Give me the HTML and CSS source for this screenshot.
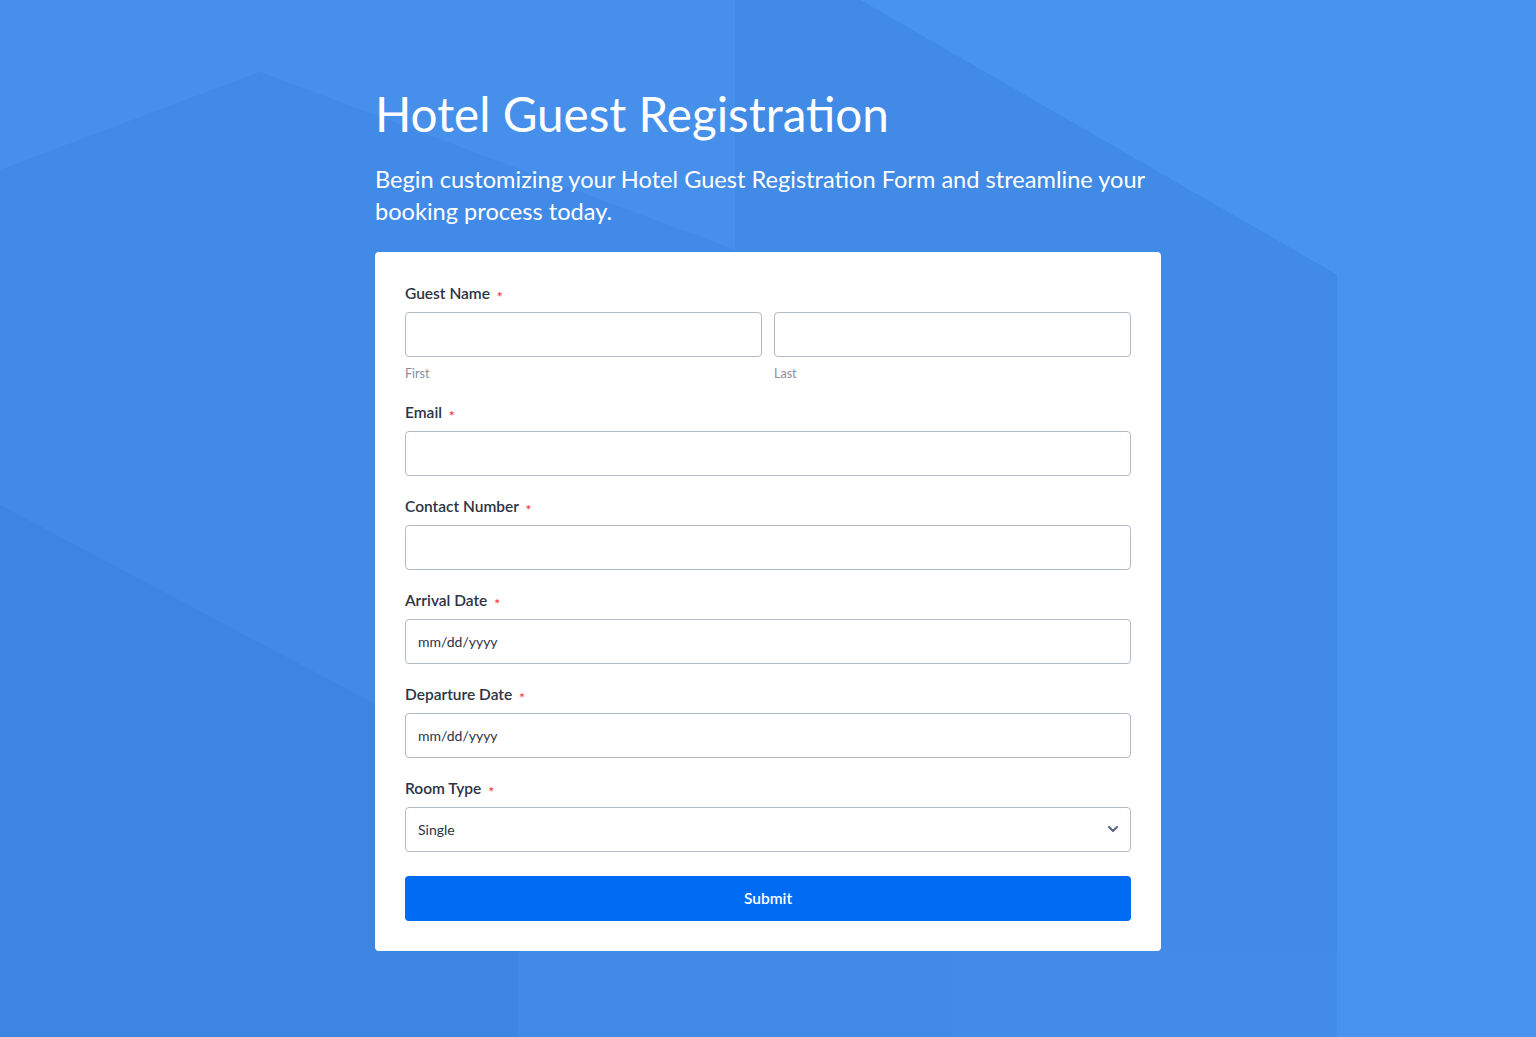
FILE: index.html
```html
<!DOCTYPE html>
<html lang="en">
<head>
<meta charset="utf-8">
<title>Hotel Guest Registration</title>
<link rel="stylesheet" href="styles.css">
</head>
<body>
<svg class="bg" viewBox="0 0 1536 1037" preserveAspectRatio="none" aria-hidden="true">
  <rect x="0" y="0" width="1536" height="1037" fill="#428be8"/>
  <polygon points="0,0 735,0 735,250 260,72 0,170" fill="#4690ec"/>
  <polygon points="0,170 260,72 735,250 735,1037 0,1037" fill="#418ae7"/>
  <polygon points="860,0 1536,0 1536,1037 1337,1037 1337,275" fill="#4892f0"/>
  <polygon points="735,0 860,0 1337,275 1337,1037 735,1037" fill="#418ae6"/>
  <polygon points="0,505 518,780 518,1037 0,1037" fill="#3c85e3"/>
  <polygon points="958,951 1337,951 1337,1037 958,1037" fill="#428ce8"/>
</svg>
<main class="page">
  <header class="intro">
    <h1 class="title">Hotel Guest Registration</h1>
    <p class="subtitle">Begin customizing your Hotel Guest Registration Form and streamline your booking process today.</p>
  </header>
  <form class="card">
    <div class="field first">
      <div class="label">Guest Name <span class="req">*</span></div>
      <div class="name-row">
        <div class="name-col">
          <input class="input" type="text">
          <div class="sublabel">First</div>
        </div>
        <div class="name-col">
          <input class="input" type="text">
          <div class="sublabel">Last</div>
        </div>
      </div>
    </div>
    <div class="field">
      <div class="label">Email <span class="req">*</span></div>
      <input class="input" type="text">
    </div>
    <div class="field">
      <div class="label">Contact Number <span class="req">*</span></div>
      <input class="input" type="text">
    </div>
    <div class="field">
      <div class="label">Arrival Date <span class="req">*</span></div>
      <input class="input date" type="text" placeholder="mm/dd/yyyy">
    </div>
    <div class="field">
      <div class="label">Departure Date <span class="req">*</span></div>
      <input class="input date" type="text" placeholder="mm/dd/yyyy">
    </div>
    <div class="field last">
      <div class="label">Room Type <span class="req">*</span></div>
      <div class="select-wrap">
        <select class="input select">
          <option>Single</option>
          <option>Double</option>
          <option>Suite</option>
        </select>
        <svg class="chevron" width="12" height="8" viewBox="0 0 12 8" aria-hidden="true"><path d="M2 2 L6 6 L10 2" fill="none" stroke="#57647e" stroke-width="2" stroke-linecap="round" stroke-linejoin="round"/></svg>
      </div>
    </div>
    <button class="submit" type="button">Submit</button>
  </form>
</main>
</body>
</html>
```

FILE: styles.css
```css
* { box-sizing: border-box; }
html, body { margin: 0; padding: 0; }
body {
  font-family: Lato, "Open Sans", sans-serif;
  background: #428be8;
  min-height: 1037px;
  position: relative;
  overflow: hidden;
}
.bg {
  position: absolute;
  left: 0; top: 0;
  width: 100%; height: 1037px;
  z-index: 0;
}
.page {
  position: relative;
  z-index: 1;
  width: 786px;
  margin: 0 auto;
  padding-top: 85px;
}
.intro { color: #fff; }
.title {
  margin: 0;
  font-size: 47.6px;
  line-height: 57.6px;
  font-weight: 400;
}
.subtitle {
  margin: 20px 0 0;
  font-size: 23.6px;
  line-height: 32px;
  font-weight: 400;
}
.card {
  margin-top: 25px;
  background: #fff;
  border-radius: 4px;
  padding: 31px 30px 30px;
  display: flex;
  flex-direction: column;
}
.field { margin-bottom: 20px; }
.field.first { margin-bottom: 19px; }
.field.last { margin-bottom: 24px; }
.label {
  height: 20px;
  font-size: 15.5px;
  line-height: 20px;
  font-weight: 600;
  color: #2c3345;
  margin-bottom: 9px;
  white-space: nowrap;
}
.req {
  color: #f23a3c;
  font-size: 14px;
  line-height: 0;
  margin-left: 3px;
  position: relative;
  top: 3px;
}
.input {
  display: block;
  width: 100%;
  height: 45px;
  border: 1px solid #b4b9c6;
  border-radius: 4px;
  background: #fff;
  padding: 0 12px;
  font-family: Lato, "Open Sans", sans-serif;
  font-size: 14px;
  color: #2c3345;
  outline: none;
}
.date::placeholder { color: #2c3345; opacity: 1; }
.name-row { display: flex; gap: 12px; }
.name-col { flex: 1; }
.sublabel {
  margin-top: 8px;
  font-size: 12.5px;
  line-height: 18px;
  color: #8a8e9c;
}
.select-wrap { position: relative; }
.select {
  appearance: none;
  -webkit-appearance: none;
  padding-right: 36px;
}
.chevron {
  position: absolute;
  right: 12px;
  top: 18px;
  pointer-events: none;
}
.submit {
  height: 45px;
  border: none;
  border-radius: 4px;
  background: #006cf3;
  color: #fff;
  font-family: Lato, "Open Sans", sans-serif;
  font-size: 15.5px;
  font-weight: 600;
  cursor: pointer;
}
```
